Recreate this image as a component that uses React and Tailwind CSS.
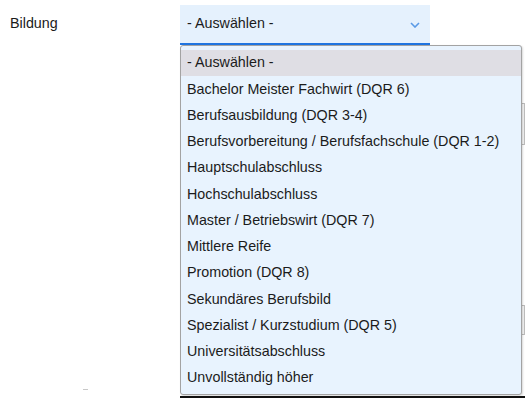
import React from "react";

const options = [
  "- Auswählen -",
  "Bachelor Meister Fachwirt (DQR 6)",
  "Berufsausbildung (DQR 3-4)",
  "Berufsvorbereitung / Berufsfachschule (DQR 1-2)",
  "Hauptschulabschluss",
  "Hochschulabschluss",
  "Master / Betriebswirt (DQR 7)",
  "Mittlere Reife",
  "Promotion (DQR 8)",
  "Sekundäres Berufsbild",
  "Spezialist / Kurzstudium (DQR 5)",
  "Universitätsabschluss",
  "Unvollständig höher",
];

function Row({ className = "", label = null, children }) {
  return (
    <div className={"flex items-start " + className}>
      <div className="w-[180px] shrink-0 pl-[10px]">{label}</div>
      {children}
    </div>
  );
}

export default function App() {
  return (
    <div
      className="relative w-[525px] h-[401px] bg-white overflow-hidden text-[14.3px] text-[#1b1b1b] flex flex-col pt-[5px]"
      style={{ fontFamily: '"Liberation Sans", Arial, sans-serif' }}
    >
      <Row label={<div className="pt-[10px] leading-[16px]">Bildung</div>}>
        <div className="relative">
          <div className="w-[250px] h-[40px] bg-[#e5f1fd] border-b-2 border-[#1f74e0] flex items-center justify-between pl-[7px] pr-[10px]">
            <span>- Auswählen -</span>
            <svg width="10" height="6" viewBox="0 0 10 6" className="mt-[1px]">
              <path d="M1 1 L5 5 L9 1" fill="none" stroke="#5a9ae6" strokeWidth="1.6" />
            </svg>
          </div>
          {/* open list overlays the form below */}
          <div className="absolute z-10 left-0 top-full w-[342px] h-[350px] bg-[#e8f3fe] border border-[#a3a3a3] rounded-[3px] pt-[4px] shadow-[1px_1px_2px_rgba(0,0,0,0.15)]">
            {options.map((o, i) => (
              <div
                key={o}
                className={
                  "h-[26.25px] flex items-center pl-[6px] whitespace-nowrap " +
                  (i === 0 ? "bg-[#dfdee4]" : "")
                }
              >
                {o}
              </div>
            ))}
          </div>
        </div>
      </Row>

      {/* form fields behind the open list */}
      <Row className="mt-[58px]">
        <div className="w-[360px] h-[42px] bg-[#f3f3f3] border border-[#bdbdbd]" />
      </Row>
      <Row className="mt-[160px]">
        <div className="w-[360px] h-[30px] bg-[#f3f3f3] border border-[#bdbdbd]" />
      </Row>
      <Row
        className="mt-[54px]"
        label={<div className="ml-[73px] w-[5px] h-px bg-[#c8c8c8]" />}
      >
        <div className="w-[360px] h-[2px] mt-[7px] bg-[#111]" />
      </Row>
    </div>
  );
}
